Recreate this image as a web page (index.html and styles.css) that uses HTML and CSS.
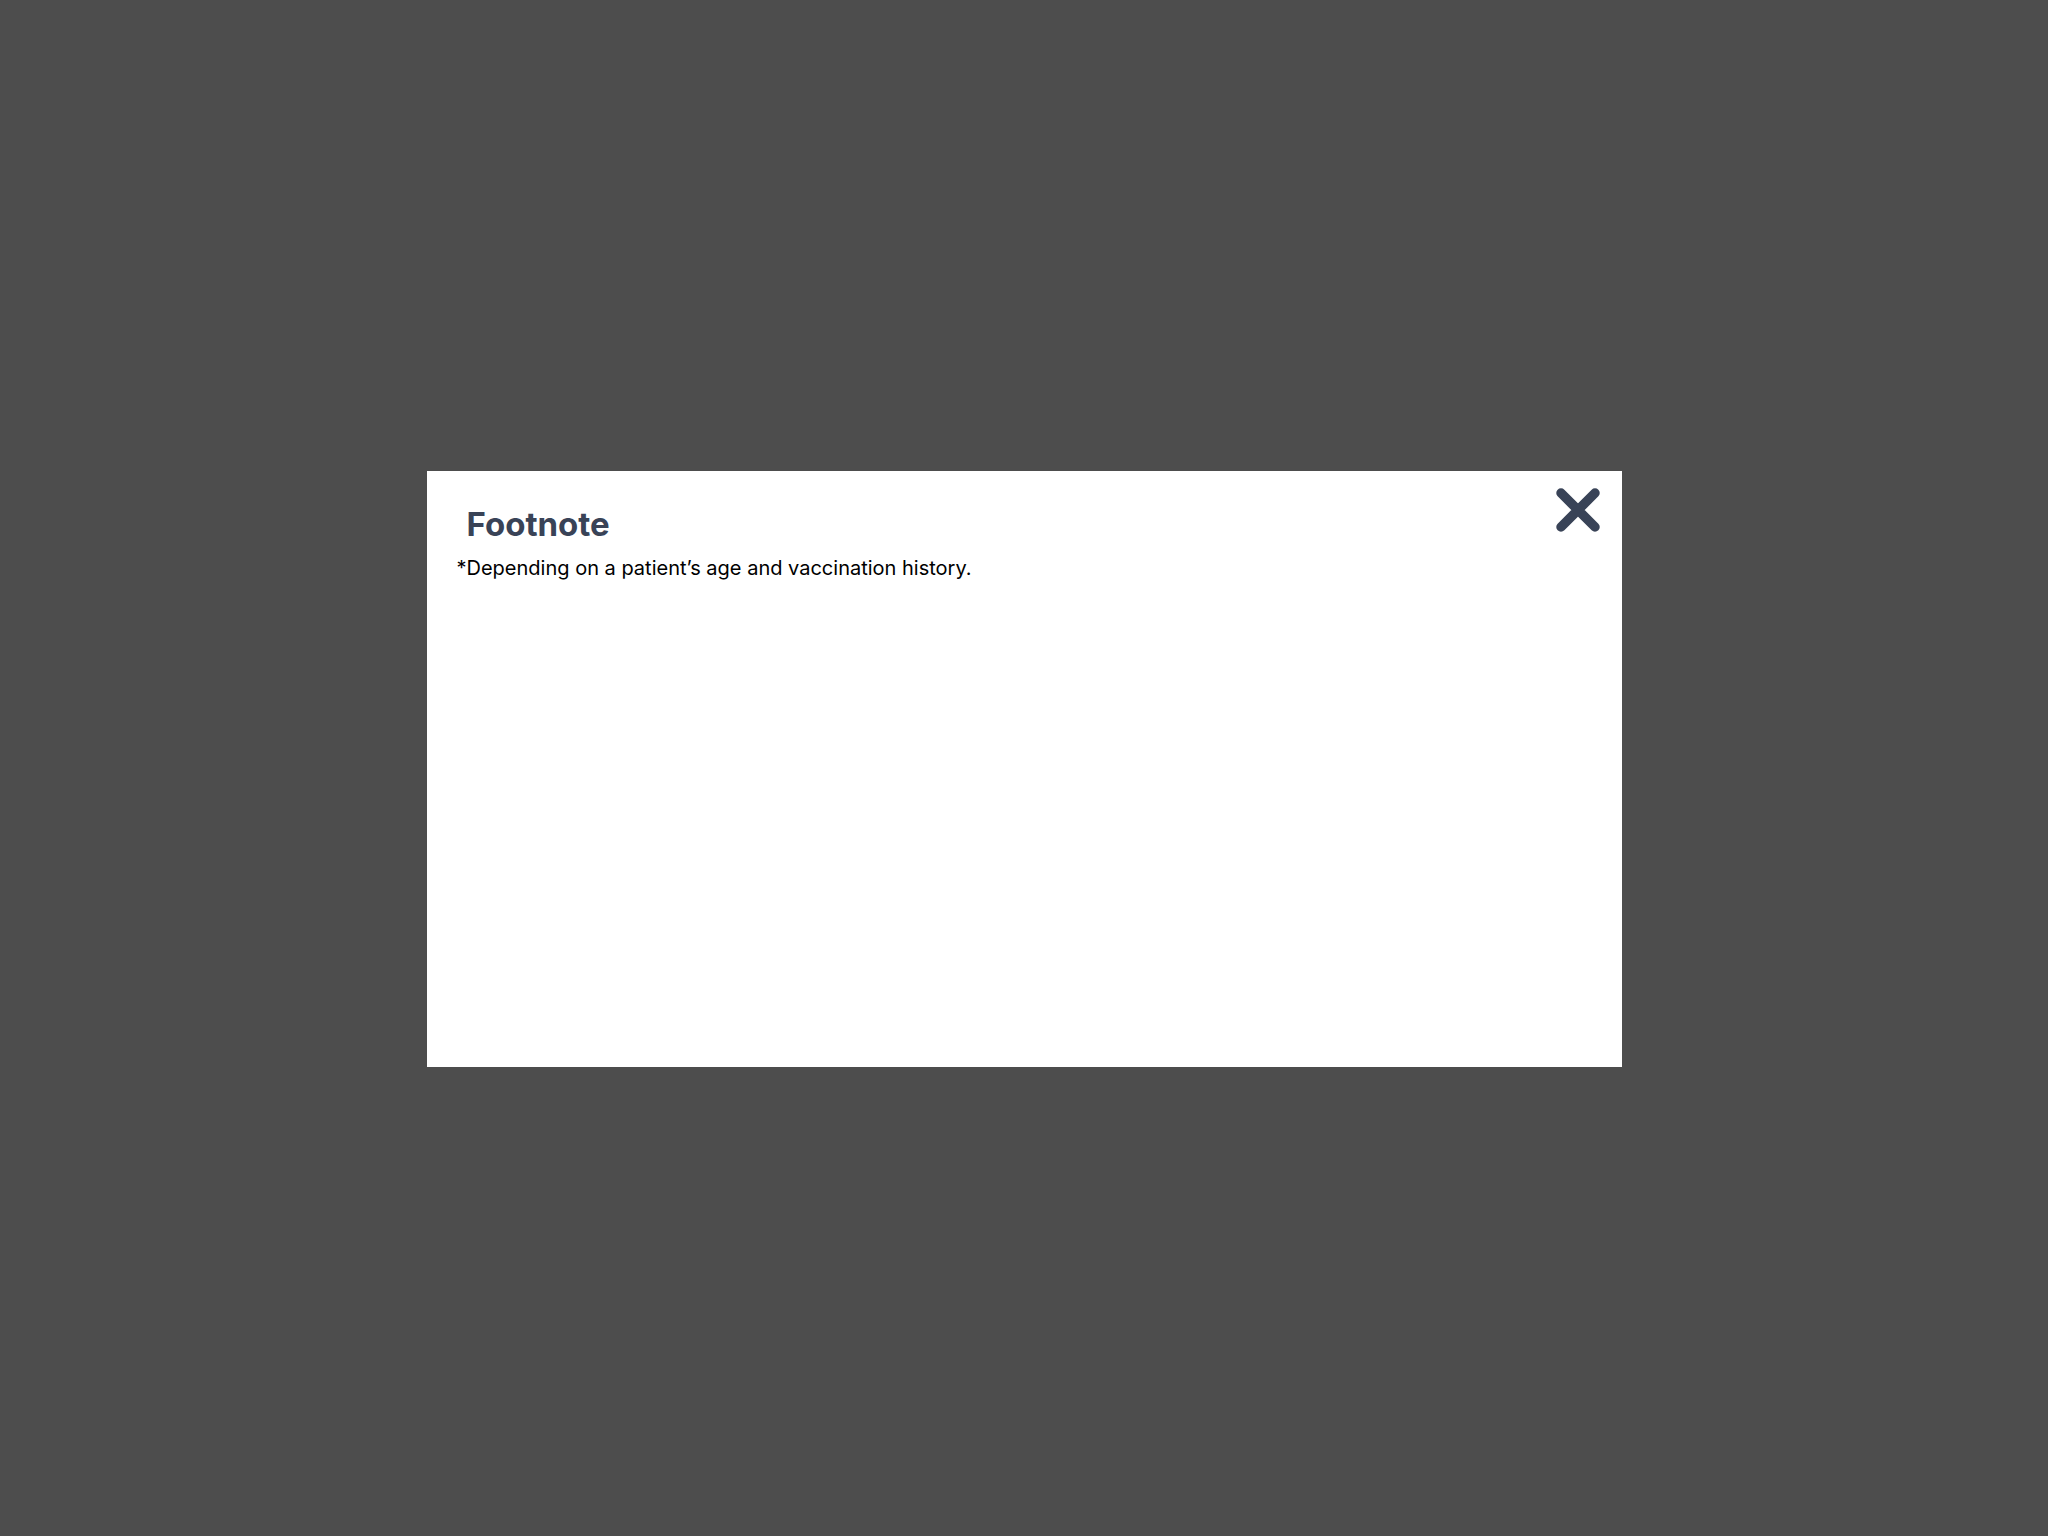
FILE: index.html
```html
<!DOCTYPE html>
<html lang="en">
<head>
<meta charset="utf-8">
<title>Footnote</title>
<link rel="stylesheet" href="styles.css">
</head>
<body>
<div class="overlay">
  <div class="modal" role="dialog" aria-labelledby="fn-title">
    <button class="close" aria-label="Close">
      <svg viewBox="0 0 44 44" width="44" height="44" aria-hidden="true">
        <path d="M5 5 L39 39 M39 5 L5 39" stroke="#394357" stroke-width="9.5" stroke-linecap="round" fill="none"/>
      </svg>
    </button>
    <h2 class="title" id="fn-title">Footnote</h2>
    <p class="text">*Depending on a patient’s age and vaccination history.</p>
  </div>
</div>
</body>
</html>
```
FILE: styles.css
```css
html, body {
  margin: 0;
  padding: 0;
  height: 100%;
}
body {
  background: #4d4d4d;
  font-family: Inter, "Noto Sans", sans-serif;
}
.overlay {
  box-sizing: border-box;
  height: 100vh;
  padding-top: 2px;
  display: flex;
  align-items: center;
  justify-content: center;
}
.modal {
  position: relative;
  box-sizing: border-box;
  width: 1195px;
  height: 596px;
  background: #ffffff;
  padding: 33px 30px;
}
.close {
  position: absolute;
  top: 17px;
  right: 22px;
  width: 44px;
  height: 44px;
  padding: 0;
  border: 0;
  background: none;
  cursor: pointer;
}
.close svg { display: block; }
.title {
  margin: 0 0 0 10px;
  font-size: 33px;
  font-weight: 700;
  color: #394357;
  line-height: 40px;
}
.text {
  margin: 10px 0 0;
  font-size: 20px;
  color: #000000;
  line-height: 28px;
}
```
